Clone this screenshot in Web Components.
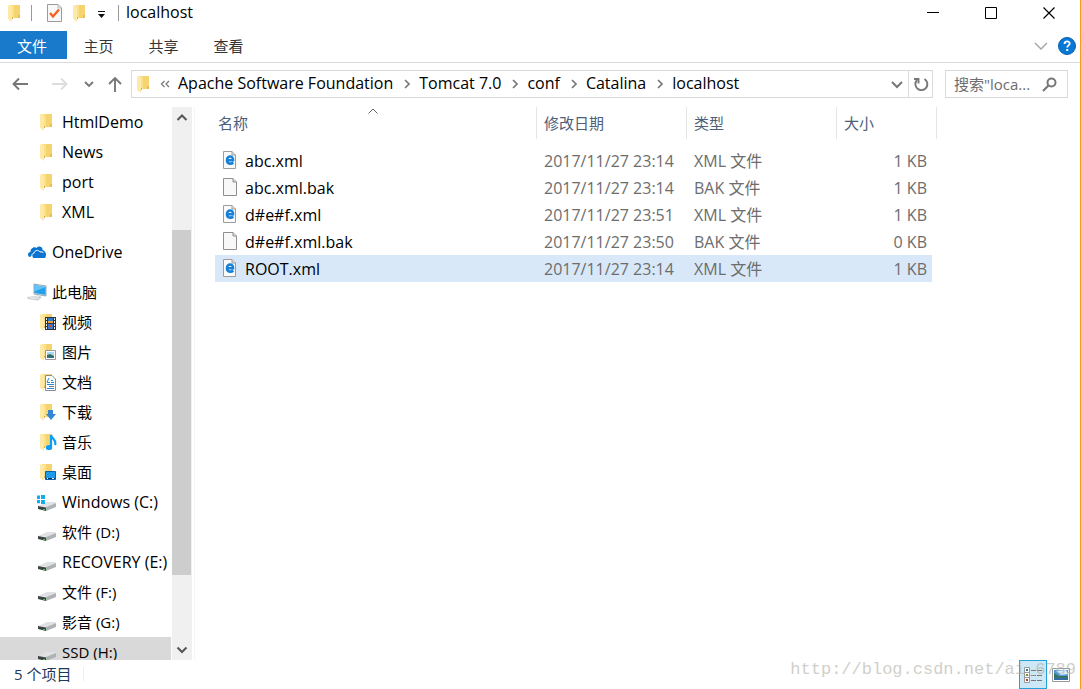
<!DOCTYPE html>
<html lang="zh-CN">
<head>
<meta charset="utf-8">
<title>localhost</title>
<style>
html, body { margin: 0; height: 100%; }
body { font: 15px/20px "Open Sans", "Noto Sans CJK SC", sans-serif; color: #000; background: #fff; }
</style>
</head>
<body>
<explorer-window>
  <title-bar slot="title">localhost</title-bar>
  <ribbon-tabs slot="ribbon"></ribbon-tabs>
  <address-bar slot="address">
    <crumb-link>Apache Software Foundation</crumb-link>
    <crumb-link>Tomcat 7.0</crumb-link>
    <crumb-link>conf</crumb-link>
    <crumb-link>Catalina</crumb-link>
    <crumb-link last>localhost</crumb-link>
  </address-bar>
  <nav-tree slot="nav">
    <nav-item lang="en" icon="folder">HtmlDemo</nav-item>
    <nav-item lang="en" icon="folder">News</nav-item>
    <nav-item lang="en" icon="folder">port</nav-item>
    <nav-item lang="en" icon="folder">XML</nav-item>
    <nav-item lang="en" root icon="onedrive">OneDrive</nav-item>
    <nav-item root icon="pc">此电脑</nav-item>
    <nav-item icon="video">视频</nav-item>
    <nav-item icon="picture">图片</nav-item>
    <nav-item icon="document">文档</nav-item>
    <nav-item icon="download">下载</nav-item>
    <nav-item icon="music">音乐</nav-item>
    <nav-item icon="desktop">桌面</nav-item>
    <nav-item lang="en" icon="windrive">Windows (C:)</nav-item>
    <nav-item icon="drive">软件 (D:)</nav-item>
    <nav-item lang="en" icon="drive">RECOVERY (E:)</nav-item>
    <nav-item icon="drive">文件 (F:)</nav-item>
    <nav-item icon="drive">影音 (G:)</nav-item>
    <nav-item selected icon="drive">SSD (H:)</nav-item>
  </nav-tree>
  <file-table slot="files"></file-table>
  <status-bar slot="status">5 个项目</status-bar>
</explorer-window>

<script>
const folder = '<path fill="#f5d36f" d="M5 2H15V15H5Z"/><path fill="#fbe08a" d="M5 2H9V15H5Z"/><path fill="#e8bd57" d="M13 12h2v3h-2z"/><path fill="#ffe9a8" d="M3 2L7 4V19L3 16Z"/><path fill="#ddb04c" d="M7 14h1v2H7z"/>';
const drive = '<path fill="#dfe1e3" d="M1 14L10 10H18L19 11L9 15Z"/><path fill="#aeb2b5" d="M9 15L19 11V15L9 19Z"/><path fill="#3d4245" d="M1 14L9 15.500V19L1 17Z"/><path fill="#35d43a" d="M6 17h2v1H6z"/>';
const ICONS = {
  folder,
  check: '<path fill="#f7f8fa" stroke="#9a9a9a" d="M3.500 1.500H14L17.500 5V18.500H3.500Z"/><path fill="none" stroke="#bbb" d="M14 1.500V5H17.500"/><path fill="none" stroke="#f2611f" stroke-width="2.400" d="M6 10L9 13.500L15 6.500"/>',
  caretbar: '<path fill="#111" d="M7 8h7v1H7zM7 11H14L10.500 15Z"/>',
  min: '<path stroke="#000" d="M4 9.500H16"/>',
  max: '<path fill="none" stroke="#000" d="M4.500 4.500H15.500V15.500H4.500Z"/>',
  close: '<path stroke="#000" stroke-width="1.200" d="M4.500 4.500L15.500 15.500M15.500 4.500L4.500 15.500"/>',
  expand: '<path fill="none" stroke="#a3a3a3" stroke-width="1.400" d="M4 7L10 13L16 7"/>',
  help: '<circle cx="10" cy="10" r="8.500" fill="#0878d7" stroke="#0861b3"/><path fill="none" stroke="#fff" stroke-width="1.800" d="M7.500 8C7.500 4.300 12.700 4.600 12.700 7.600C12.700 9.300 10.200 9.500 10.200 11.500"/><path fill="#fff" d="M9.200 13h2v2h-2z"/>',
  back: '<path fill="none" stroke="#777" stroke-width="1.900" d="M17 10H2.500M8 4.500L2.500 10L8 15.500"/>',
  forward: '<path fill="none" stroke="#ddd" stroke-width="1.900" d="M3 10H17.500M12 4.500L17.500 10L12 15.500"/>',
  down: '<path fill="none" stroke="#777" stroke-width="1.900" d="M6 8L10 12L14 8"/>',
  up: '<path fill="none" stroke="#777" stroke-width="1.900" d="M10 18V4M4 10L10 4L16 10"/>',
  dropdown: '<path fill="none" stroke="#777" stroke-width="2" d="M5 8L10 13L15 8"/>',
  refresh: '<path fill="none" stroke="#777" stroke-width="1.900" d="M13.500 5A6 6 0 1 1 6 6"/><path fill="none" stroke="#777" stroke-width="1.900" d="M3 5H7.500V9.500"/>',
  search: '<circle cx="12.500" cy="8.500" r="4" fill="none" stroke="#777" stroke-width="2"/><path stroke="#777" stroke-width="2.200" d="M9.500 11.500L4 17"/>',
  sep: '<path fill="none" stroke="#777" stroke-width="1.700" d="M8 6L12 10L8 14"/>',
  more: '<path fill="none" stroke="#777" stroke-width="1.300" d="M9.500 7L6.500 10L9.500 13M14 7L11 10L14 13"/>',
  sort: '<path fill="none" stroke="#666" d="M5.500 12.500L10 8L14.500 12.500"/>',
  scrollup: '<path fill="none" stroke="#555" stroke-width="2" d="M5.500 13L10 8.500L14.500 13"/>',
  scrolldown: '<path fill="none" stroke="#555" stroke-width="2" d="M5.500 7.500L10 12L14.500 7.500"/>',
  onedrive: '<path fill="#0a75d1" d="M3 15C0 14 .5 10 3.500 10C3 6 8 4 9.500 6C12 3 16 5 15.500 8C19 9 20 13 18 16H7C5 16 4.500 13 6.500 11.500C7 8.500 10 7.500 12 9"/><path fill="none" stroke="#fff" d="M5.500 16C4 13.500 5 11.500 7 11.300C7.500 8 11.500 7.500 13 10C14.500 9.500 16 10 16.500 11"/>',
  pc: '<path fill="#d5e1e8" stroke="#7f95a3" stroke-width=".8" d="M7 2L19 4V14L7 12Z"/><path fill="#23a0e9" d="M7.500 3L18.500 5V13L7.500 11Z"/><path fill="#61c4fb" d="M7.500 3L18.500 5L7.500 9.500Z"/><path fill="#c5cbd0" d="M0 15L11 13.500L15 15L11 18.500L1 17Z"/><path stroke="#f3f5f6" stroke-width=".8" d="M2 15.500L12 14.500M4 16.800L12 16"/>',
  video: folder + '<path fill="#333" d="M8 5h11v13H8z"/><path fill="#2e7ad0" d="M11 6h5v5h-5z"/><path fill="#e5a23c" d="M11 9h5v2h-5z"/><path fill="#4378d0" d="M11 12h5v5h-5z"/><path fill="#d24b2a" d="M12 13h3v2h-3z"/><path stroke="#eee" stroke-dasharray="2 1" d="M9.500 6V18M17.500 6V18"/>',
  picture: folder + '<path fill="#fff" stroke="#999" d="M8.500 8.500H18.500V17.500H8.500Z"/><path fill="#a9d8f7" d="M10 10h7v6h-7z"/><path fill="#2d6ea4" d="M10 14h7v2h-7z"/><path fill="#35705b" d="M10 13L13 12L17 14V15H10Z"/>',
  document: folder + '<path fill="#fff" stroke="#8c8c8c" d="M8.500 3.500H15L18.500 7V18.500H8.500Z"/><path stroke="#268bd2" d="M14 8.500H16M10 10.500H13M14 10.500H17M10 12.500H17M10 16.500H17M10 10L12 6"/><path stroke="#777" d="M12 14.500H17"/>',
  download: folder + '<path fill="#3487d2" d="M11 8H16V12H19L14 18L9 12H11Z"/>',
  music: folder + '<path fill="none" stroke="#0a9ff5" stroke-width="2.200" d="M14 15V3C15 7 20 8 18 13"/><ellipse cx="12" cy="15.500" rx="3.200" ry="2.600" fill="#0a9ff5"/>',
  desktop: folder + '<path fill="#1c9bea" stroke="#0b63ac" d="M8.500 9.500H18.500V17.500H8.500Z"/><path stroke="#07365f" d="M9 16.500H18"/><path fill="#fff" d="M10 16h1v1h-1zM15 16h2v1h-2z"/>',
  drive,
  windrive: drive + '<path fill="#10aef0" d="M0 3.500H3V7H0ZM4 3H8V7H4ZM0 8H3V11.300H0ZM4 8H8V12H4Z"/>',
  xml: '<path fill="#fafafa" stroke="#9c9c9c" d="M3.500 1.500H12L15.500 5V18.500H3.500Z"/><path fill="#ddd" stroke="#9c9c9c" d="M12 1.500V5H15.500"/><path fill="none" stroke="#1581d8" stroke-width="2.600" d="M6.500 10.300H13C13.500 5.300 7 5.300 7 10.200C7 14 11 14.300 13.300 12.600"/>',
  bak: '<path fill="#f8f8f8" stroke="#8f8f8f" d="M3.500 1.500H13L16.500 5V18.500H3.500Z"/><path fill="#ddd" stroke="#8f8f8f" d="M13 1.500V5H16.500"/>',
  details: '<path fill="#fff" stroke="#999" d="M1.500 2.500H6.500V17.500H1.500ZM1.500 7.500H6.500M1.500 12.500H6.500"/><path fill="#2b7b9b" d="M3 4h2v2H3z"/><path fill="#6b8e23" d="M3 9h2v2H3z"/><path fill="#b93725" d="M3 14h2v2H3z"/><path stroke="#777" stroke-dasharray="5 1" d="M8 5.500H19M8 10.500H19M8 15.500H19"/>',
  thumbs: '<path fill="#fff" stroke="#999" d="M1.500 3.500H18.500V16.500H1.500Z"/><path fill="#4f9ae0" d="M3 5h14v10H3z"/><path fill="#d9effa" d="M5 6L15 5L17 9L10 10Z"/><path fill="#3c725f" d="M3 8L8 11L17 11V13L3 13Z"/><path fill="#326ca8" d="M3 13h14v2H3z"/>'
};

/* Registers an element whose shadow root is cloned from a template. */
function define(name, html) {
  const template = document.createElement('template');
  customElements.define(name, class extends HTMLElement {
    connectedCallback() {
      if (this.shadowRoot) return;
      template.innerHTML = typeof html === 'function' ? html(this) : html;
      this.attachShadow({ mode: 'open' }).append(template.content.cloneNode(true));
    }
  });
}
const button = 'button{border:0;padding:0;margin:0;background:none;font:inherit;color:inherit;display:flex;align-items:center;justify-content:center;flex:none}';

define('ui-icon', el => `<style>:host{display:block;width:20px;height:20px;flex:none}svg{display:block}</style>
<svg width="20" height="20" viewBox="0 0 20 20" aria-hidden="true">${ICONS[el.getAttribute('name')]}</svg>`);

define('explorer-window', `<style>
:host{display:flex;flex-direction:column;height:100vh;min-height:400px;box-sizing:border-box;border-right:1px solid #f79a1e;position:relative;overflow:hidden}
main{display:flex;flex:1;min-height:0;margin-top:9px}
slot[name=files]{display:block}
.mark{position:absolute;right:4px;bottom:9px;font:17px/20px "Liberation Mono",monospace;color:#aaa99f;opacity:.55;pointer-events:none}
</style><slot name="title"></slot><slot name="ribbon"></slot><slot name="address"></slot>
<main><slot name="nav"></slot><slot name="files"></slot></main><slot name="status"></slot>
<span class="mark">http://blog.csdn.net/ai_6789</span>`);

define('title-bar', `<style>${button}
:host{display:flex;align-items:center;height:26px;padding-left:5px;flex:none}
i{width:1px;height:16px;background:#999}
.quick{display:flex;align-items:center}
.quick ui-icon+i{margin:0 12px 0 6px}
.quick i:last-child{margin:0 7px}
.quick .gap{margin:0 1px 0 6px}
h1{flex:1;margin:0;font:inherit;font-size:16px;line-height:26px;height:28px}
.win button{width:58px;height:26px}
.win{display:flex;padding-right:2px}
</style><div class="quick"><ui-icon name="folder"></ui-icon><i></i><button aria-label="属性"><ui-icon name="check"></ui-icon></button><button class="gap" aria-label="新建文件夹"><ui-icon name="folder"></ui-icon></button><button aria-label="自定义"><ui-icon name="caretbar"></ui-icon></button><i></i></div>
<h1><slot></slot></h1>
<div class="win"><button aria-label="最小化"><ui-icon name="min"></ui-icon></button><button aria-label="最大化"><ui-icon name="max"></ui-icon></button><button aria-label="关闭"><ui-icon name="close"></ui-icon></button></div>`);

define('ribbon-tabs', `<style>${button}
:host{display:flex;align-items:center;height:32px;padding-top:4px;border-bottom:1px solid #dadbdc;flex:none;color:#333}
button{width:65px;height:28px}
nav button{padding:2px 2px 0 0}
nav .file{width:67px;background:#1979ca;color:#fff;padding-right:3px}
nav{display:flex;flex:1;align-self:flex-start;padding-top:1px}
.side{width:26px}
</style><nav><button class="file">文件</button><button>主页</button><button>共享</button><button>查看</button></nav>
<button class="side" aria-label="展开功能区"><ui-icon name="expand"></ui-icon></button><button class="side" aria-label="帮助"><ui-icon name="help"></ui-icon></button>`);

define('crumb-link', el => `<style>:host{display:flex;align-items:center;white-space:nowrap;font-size:16px;padding-bottom:2px}
a{color:inherit;text-decoration:none}ui-icon{margin:2px 2px 0 4px}</style>
<a href="#"><slot></slot></a>${el.hasAttribute('last') ? '' : '<ui-icon name="sep"></ui-icon>'}`);

define('address-bar', `<style>${button}
:host{display:flex;align-items:center;height:28px;margin-top:7px;padding:0 12px 0 11px;flex:none}
.nav{display:flex;gap:18px;width:120px;align-items:center}
.nav button:nth-child(3){margin:0 -12px 0 -8px}
.path{display:flex;flex:1;min-width:0;height:26px;border:1px solid #d9d9d9;align-items:center}
.crumbs{display:flex;flex:1;min-width:0;overflow:hidden;align-items:center;padding-left:2px}
.crumbs>ui-icon+ui-icon{margin:0 3px 0 1px}
.path button{width:23px;height:26px}
.path .refresh{border-left:1px solid #d9d9d9;width:24px}
.search{display:flex;align-items:center;box-sizing:border-box;width:123px;height:28px;border:1px solid #d9d9d9;margin-left:12px;padding:0 8px}
input{flex:1;min-width:0;border:0;padding:0;outline:0;background:none;font:inherit;height:24px}
input::placeholder{color:#6d6d6d;opacity:1}
</style><div class="nav"><button aria-label="后退"><ui-icon name="back"></ui-icon></button><button aria-label="前进"><ui-icon name="forward"></ui-icon></button><button aria-label="最近位置"><ui-icon name="down"></ui-icon></button><button aria-label="向上"><ui-icon name="up"></ui-icon></button></div>
<div class="path"><div class="crumbs"><ui-icon name="folder"></ui-icon><ui-icon name="more"></ui-icon><slot></slot></div>
<button aria-label="以前的位置"><ui-icon name="dropdown"></ui-icon></button><button class="refresh" aria-label="刷新"><ui-icon name="refresh"></ui-icon></button></div>
<label class="search"><input type="text" aria-label="搜索" placeholder='搜索"loca...'><ui-icon name="search"></ui-icon></label>`);

define('nav-item', el => `<style>
:host{display:block;flex:none}
:host(:lang(en)){font-size:16px}
:host([root]){margin-top:10px}
a{display:flex;align-items:center;height:30px;padding-left:37px;gap:5px;color:inherit;text-decoration:none;white-space:nowrap}
:host([root]) a{padding-left:27px}
:host([selected]) a{background:#d9d9d9}
</style><a href="#"><ui-icon name="${el.getAttribute('icon')}"></ui-icon><slot></slot></a>`);

define('nav-tree', `<style>${button}
:host{display:flex;width:194px;flex:none;border-right:1px solid #f5f5f5;overflow:hidden}
.list{width:171px;margin-right:1px;overflow:hidden;display:flex;flex-direction:column}
.rail{width:20px;background:#f0f0f0;display:flex;flex-direction:column}
.rail button{width:20px;height:20px}
.top{flex:103}.thumb{flex:345;width:19px;background:#cdcdcd}.rest{flex:65}
</style><nav class="list"><slot></slot></nav>
<div class="rail"><button aria-label="向上滚动"><ui-icon name="scrollup"></ui-icon></button><div class="top"></div><div class="thumb"></div><div class="rest"></div><button aria-label="向下滚动"><ui-icon name="scrolldown"></ui-icon></button></div>`);

const FILES = [
  ['xml', 'abc.xml', '2017/11/27 23:14', 'XML 文件', '1 KB'],
  ['bak', 'abc.xml.bak', '2017/11/27 23:14', 'BAK 文件', '1 KB'],
  ['xml', 'd#e#f.xml', '2017/11/27 23:51', 'XML 文件', '1 KB'],
  ['bak', 'd#e#f.xml.bak', '2017/11/27 23:50', 'BAK 文件', '0 KB'],
  ['xml', 'ROOT.xml', '2017/11/27 23:14', 'XML 文件', '1 KB']
];
define('file-table', `<style>
:host{display:block;padding-left:20px}
table{border-collapse:separate;border-spacing:0;table-layout:fixed;width:717px}
col:nth-child(1){width:321px}col:nth-child(2),col:nth-child(3){width:150px}
th{height:32px;padding:0 0 0 7px;border-left:1px solid #e5e5e5;font-weight:400;text-align:left;color:#4c607a;position:relative}
th:first-child{border:0;padding-left:3px}
th:last-child::after{content:"";position:absolute;left:99px;top:0;width:1px;height:100%;background:#e5e5e5}
th ui-icon{position:absolute;left:148px;top:-6px}
tbody::before{content:"";display:block;height:8px}
tbody{font-size:16px}
td{height:27px;padding:0 0 0 8px;color:#6d6d6d;white-space:nowrap}
td:first-child{padding-left:5px;color:#000}
td:last-child{text-align:right;padding-right:5px}
.name{display:flex;align-items:center;gap:5px}
.name ui-icon{margin-bottom:2px}
tr:last-child td{background:#d8e8f8}
</style><table><colgroup><col><col><col><col></colgroup>
<thead><tr><th>名称<ui-icon name="sort"></ui-icon></th><th>修改日期</th><th>类型</th><th>大小</th></tr></thead>
<tbody>${FILES.map(f => `<tr><td><div class="name"><ui-icon name="${f[0]}"></ui-icon><span>${f[1]}</span></div></td><td>${f[2]}</td><td>${f[3]}</td><td>${f[4]}</td></tr>`).join('')}</tbody></table>`);

define('status-bar', `<style>${button}
:host{display:flex;align-items:center;height:29px;padding:0 6px 0 14px;color:#1e395b;flex:none}
span{flex:1;display:flex;align-items:center;height:29px;line-height:20px;padding-bottom:2px}
span::after{content:"";width:1px;height:14px;margin-left:12px;background:#eee}
button{width:27px;height:29px}
.on{box-sizing:border-box;width:28px;background:#cce8f6;border:1px solid #26a0da}
</style><span><slot></slot></span><button class="on" aria-label="详细信息"><ui-icon name="details"></ui-icon></button><button aria-label="大缩略图"><ui-icon name="thumbs"></ui-icon></button>`);
</script>
</body>
</html>
